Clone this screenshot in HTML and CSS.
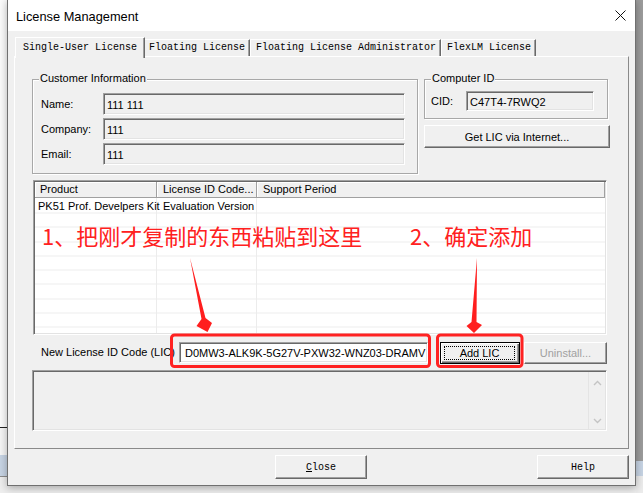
FILE: index.html
```html
<!DOCTYPE html>
<html lang="zh-CN">
<head>
    <meta charset="UTF-8">
    <title>License Management</title>
    <link rel="stylesheet" href="styles.css">
</head>
<body>
    <div class="window">
        <div class="titlebar">
            <span class="title">License Management</span>
            <svg class="close-x" width="11" height="11" viewBox="0 0 11 11">
                <path d="M0.5 0.5 L10.5 10.5 M10.5 0.5 L0.5 10.5" stroke="#111" stroke-width="1" fill="none"/>
            </svg>
        </div>

        <div class="client">
            <div class="tabs">
                <div class="tab active">Single-User License</div>
                <div class="tab">Floating License</div>
                <div class="tab">Floating License Administrator</div>
                <div class="tab">FlexLM License</div>
            </div>

            <div class="page">
                <div class="top">
                    <div class="group customer">
                        <span class="group-title">Customer Information</span>
                        <div class="form-row"><span class="label">Name:</span><div class="field">111 111</div></div>
                        <div class="form-row"><span class="label">Company:</span><div class="field">111</div></div>
                        <div class="form-row"><span class="label">Email:</span><div class="field">111</div></div>
                    </div>
                    <div class="side">
                        <div class="group computer">
                            <span class="group-title">Computer ID</span>
                            <div class="form-row"><span class="label">CID:</span><div class="field">C47T4-7RWQ2</div></div>
                        </div>
                        <div class="btn get-lic">Get LIC via Internet...</div>
                    </div>
                </div>

                <!-- elenco licenze -->
                <div class="list">
                    <div class="list-head">
                        <div class="head-cell">Product</div>
                        <div class="head-cell">License ID Code...</div>
                        <div class="head-cell last">Support Period</div>
                    </div>
                    <div class="list-body">
                        <div class="cell">PK51 Prof. Develpers Kit</div>
                        <div class="cell">Evaluation Version</div>
                        <div class="cell last"></div>
                        <div class="cell"></div>
                        <div class="cell"></div>
                        <div class="cell last"></div>
                    </div>
                </div>

                <div class="lic-row">
                    <span class="lic-label">New License ID Code (LIC)</span>
                    <div class="field lic-field">D0MW3-ALK9K-5G27V-PXW32-WNZ03-DRAMV</div>
                    <div class="btn default"><span class="focus">Add LIC</span></div>
                    <div class="btn disabled">Uninstall...</div>
                </div>

                <div class="messages">
                    <div class="scrollbar">
                        <svg width="9" height="6" viewBox="0 0 9 6"><path d="M1 5 L4.5 1.5 L8 5" stroke="#c4c4c4" stroke-width="1.4" fill="none"/></svg>
                        <svg width="9" height="6" viewBox="0 0 9 6"><path d="M1 1 L4.5 4.5 L8 1" stroke="#c4c4c4" stroke-width="1.4" fill="none"/></svg>
                    </div>
                </div>
            </div>

            <div class="footer">
                <div class="btn big"><u>C</u>lose</div>
                <div class="btn big">Help</div>
            </div>
        </div>
    </div>

    <!-- annotazioni rosse sopra lo screenshot -->
    <div class="annotations">
        <svg width="643" height="493" viewBox="0 0 643 493">
            <polygon points="190,258 205.5,318 212,323 207.5,332 196.5,326 201.5,319" fill="#ff1e1e"/>
            <polygon points="477,258 476.5,322 482,325 474,333 466.5,326 471.5,322" fill="#ff1e1e"/>
            <rect x="171.5" y="335" width="258" height="31.5" rx="3" fill="none" stroke="#ff2222" stroke-width="3"/>
            <rect x="437.5" y="335" width="84.5" height="31.5" rx="3" fill="none" stroke="#ff2222" stroke-width="3"/>
        </svg>
        <div class="note note-1">1、把刚才复制的东西粘贴到这里</div>
        <div class="note note-2">2、确定添加</div>
    </div>
</body>
</html>
```

FILE: styles.css
```css
* {
    box-sizing: border-box;
}
body {
    margin: 0;
    width: 643px;
    height: 493px;
    overflow: hidden;
    position: relative;
    font-family: "Liberation Sans", Arial, sans-serif;
    font-size: 11px;
    color: #000;
    background:
        linear-gradient(#fbfbfb 0 427px, #222 427px 428px, #f6f6f6 428px 455px, #c7d4e4 455px 476px, #8c8c8c 476px 477px, #eeeeee 477px) left top / 7px 100% no-repeat,
        linear-gradient(#9c9c9c 0 461px, #c7d4e4 461px 476px, #ececec 476px) right top / 7px 100% no-repeat,
        #eeeeee;
}
.window {
    margin: -1px 0 0 7px;
    width: 629px;
    border: 1px solid #707070;
    background: #f0f0f0;
    box-shadow: 0 2px 8px rgba(0, 0, 0, 0.3);
}
.titlebar {
    height: 31px;
    background: #fff;
    display: flex;
    align-items: center;
    justify-content: space-between;
    padding: 1px 9px 0 8px;
}
.title {
    font-size: 12.8px;
}
.close-x {
    margin-top: -1px;
}
.client {
    height: 454px;
    padding: 6px 6px 6px;
}

/* tabs */
.tabs {
    display: flex;
    align-items: flex-end;
    height: 19px;
    padding-left: 3px;
    font-family: "Liberation Mono", "Courier New", monospace;
    font-size: 10px;
}
.tab {
    height: 17px;
    line-height: 16px;
    padding: 0 4px 0 5px;
    border-top: 1px solid #fff;
    border-left: 1px solid #fff;
    border-right: 1px solid #696969;
    box-shadow: inset -1px 0 0 #a0a0a0;
    white-space: nowrap;
}
.tab.active {
    height: 21px;
    line-height: 19px;
    padding: 0 7px;
    margin: 0 -2px -2px -2px;
    position: relative;
    z-index: 1;
    background: #f0f0f0;
}

/* tab page */
.page {
    height: 393px;
    border: 1px solid;
    border-color: #fff #8a8a8a #8a8a8a #fff;
    padding: 22px 0 0 17px;
}
.top {
    display: grid;
    grid-template-columns: 386px 186px;
    column-gap: 6px;
    align-items: start;
}
.group {
    position: relative;
    border: 1px solid #a8a8a8;
    box-shadow: inset 1px 1px 0 #fff, 1px 1px 0 #fff;
}
.group-title {
    position: absolute;
    top: -8px;
    left: 6px;
    padding: 0 1px;
    line-height: 13px;
    background: #f0f0f0;
}
.customer {
    height: 95px;
    padding: 13px 12px 8px 8px;
}
.customer .form-row + .form-row {
    margin-top: 3px;
}
.customer .label {
    width: 62px;
}
.customer .field {
    width: 302px;
    height: 22px;
}
.form-row {
    display: flex;
    align-items: center;
}
.field {
    display: flex;
    align-items: center;
    border: 1px solid;
    border-color: #a0a0a0 #fff #fff #a0a0a0;
    box-shadow: inset 1px 1px 0 #696969, inset -1px -1px 0 #e3e3e3;
    padding: 1px 3px 0;
    background: #f0f0f0;
    white-space: nowrap;
}
.side {
    display: flex;
    flex-direction: column;
    gap: 6px;
}
.computer {
    width: 184px;
    height: 40px;
    padding: 11px 13px 7px 6px;
}
.computer .label {
    width: 35px;
}
.computer .field {
    width: 128px;
    height: 20px;
    padding-left: 3px;
}

/* buttons */
.btn {
    display: flex;
    align-items: center;
    justify-content: center;
    background: #f0f0f0;
    border: 1px solid;
    border-color: #fff #696969 #696969 #fff;
    box-shadow: inset -1px -1px 0 #a0a0a0;
    white-space: nowrap;
}
.get-lic {
    width: 186px;
    height: 23px;
}
.btn.default {
    width: 80px;
    height: 22px;
    border: 1px solid #000;
    box-shadow: inset 1px 1px 0 #fff, inset -1px -1px 0 #696969, inset -2px -2px 0 #a0a0a0;
    padding: 3px 4px 3px 3px;
}
.focus {
    flex: 1;
    align-self: stretch;
    display: flex;
    align-items: center;
    justify-content: center;
    border: 1px dotted #000;
}
.btn.disabled {
    width: 83px;
    height: 22px;
    color: #a0a0a0;
    margin-left: 4px;
}

/* list view */
.list {
    margin: 6px 0 0 1px;
    width: 574px;
    height: 155px;
    border: 1px solid;
    border-color: #a0a0a0 #fff #fff #a0a0a0;
    box-shadow: inset 1px 1px 0 #696969, inset -1px -1px 0 #e3e3e3;
    padding: 1px 1px 1px 1px;
    display: flex;
    flex-direction: column;
}
.list-head {
    display: grid;
    grid-template-columns: 122px 100px 1fr;
    height: 16px;
}
.head-cell {
    padding-left: 5px;
    line-height: 15px;
    border-right: 1px solid #a0a0a0;
    border-bottom: 1px solid #a0a0a0;
    box-shadow: inset 1px 1px 0 #fff;
    background: #f0f0f0;
    white-space: nowrap;
    overflow: hidden;
}
.head-cell + .head-cell {
    padding-left: 6px;
}
.list-body {
    flex: 1;
    display: grid;
    grid-template-columns: 122px 100px 1fr;
    grid-template-rows: 14.25px 1fr;
    background: repeating-linear-gradient(to bottom, #fff 0, #fff 13.25px, #ececec 13.25px, #ececec 14.25px) 0 1.5px;
}
.cell {
    border-right: 1px solid #ececec;
    padding: 1px 0 0 3px;
    line-height: 14px;
    white-space: nowrap;
}
.cell + .cell {
    padding-left: 6px;
}
.cell.last {
    border-right: none;
}

/* LIC row */
.lic-row {
    display: flex;
    align-items: flex-start;
    margin-top: 7px;
}
.lic-label {
    width: 138px;
    margin-left: 9px;
    line-height: 21px;
    white-space: nowrap;
}
.lic-field {
    width: 249px;
    height: 21px;
    margin-right: 12px;
    padding-left: 5px;
    background: #fff;
}

.messages {
    margin-top: 6px;
    width: 575px;
    height: 61px;
    border: 1px solid;
    border-color: #a0a0a0 #fff #fff #a0a0a0;
    box-shadow: inset 1px 1px 0 #696969, inset -1px -1px 0 #e3e3e3;
    display: flex;
    justify-content: flex-end;
    padding: 1px;
}
.scrollbar {
    width: 17px;
    border-left: 1px solid #e4e4e4;
    display: flex;
    flex-direction: column;
    align-items: center;
    justify-content: space-between;
    padding: 8px 0 5px;
}

/* bottom buttons */
.footer {
    display: flex;
    justify-content: flex-end;
    gap: 170px;
    margin-top: 6px;
}
.btn.big {
    width: 92px;
    height: 24px;
    font-family: "Liberation Mono", "Courier New", monospace;
    font-size: 10px;
}

/* annotations */
.annotations {
    position: absolute;
    left: 0;
    top: 0;
    width: 643px;
    height: 493px;
    pointer-events: none;
}
.annotations svg {
    display: block;
}
.note {
    position: absolute;
    top: 224px;
    font-family: "Noto Sans CJK SC", "Liberation Sans", sans-serif;
    font-size: 22px;
    line-height: 22px;
    color: #ff2020;
    white-space: nowrap;
}
.note-1 {
    left: 42px;
}
.note-2 {
    left: 410px;
}
```
